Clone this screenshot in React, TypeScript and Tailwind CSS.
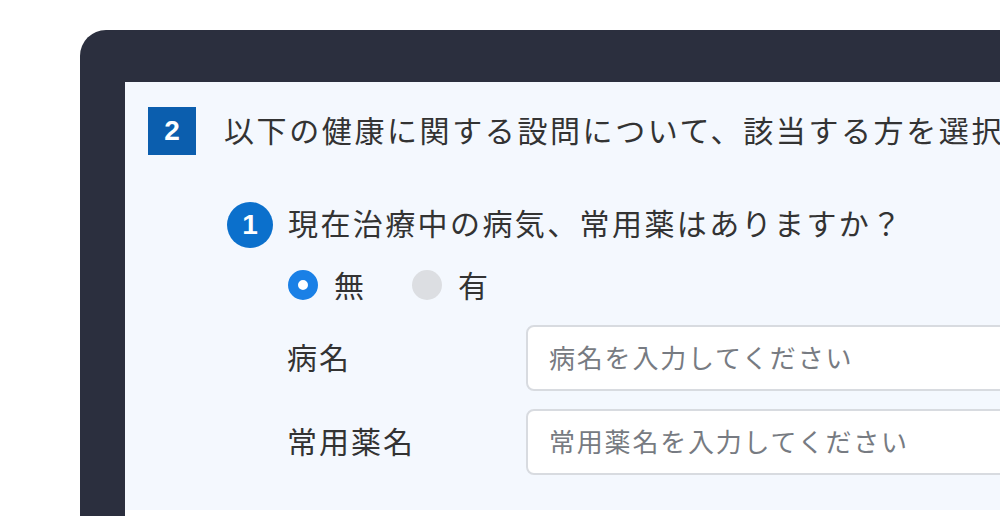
import React from "react";

const font = { fontFamily: '"Noto Sans CJK JP", "Noto Sans", sans-serif' };

export default function App() {
  return (
    <div
      className="w-[1000px] h-[516px] bg-white overflow-hidden pl-[80px] pt-[30px]"
      style={font}
    >
      <div className="h-[486px] w-[920px] bg-[#2b2f3e] rounded-tl-[26px] pl-[45px] pt-[52px]">
        <div className="h-[434px] w-[875px] bg-white overflow-hidden">
          <div className="h-[428px] w-full bg-[#f4f8fe] pl-[23px] pt-[25px] text-[#333]">
            {/* Heading */}
            <div className="flex items-center">
              <div className="shrink-0 w-[48px] h-[48px] bg-[#0b5eae] flex items-center justify-center text-white font-bold text-[28px] leading-none" style={{ fontFamily: '"Liberation Sans", Arial, sans-serif' }}>
                2
              </div>
              <div className="shrink-0 ml-[28px] pb-[4px] whitespace-nowrap text-[30px] tracking-[2.6px] leading-none">
                以下の健康に関する設問について、該当する方を選択してください
              </div>
            </div>

            {/* Question */}
            <div className="ml-[79px] mt-[47px]">
              <div className="flex items-center">
                <div className="shrink-0 w-[46px] h-[46px] rounded-full bg-[#0b70cc] flex items-center justify-center text-white font-bold text-[28px] leading-none" style={{ fontFamily: '"Liberation Sans", Arial, sans-serif' }}>
                  1
                </div>
                <div className="ml-[15px] pb-[6px] whitespace-nowrap text-[30px] tracking-[2.4px] leading-none">
                  現在治療中の病気、常用薬はありますか？
                </div>
              </div>

              <div className="ml-[61px] mt-[22px] flex items-center h-[30px]">
                <div className="shrink-0 w-[30px] h-[30px] rounded-full border-[10px] border-[#1a80e6] bg-white" />
                <span className="ml-[16px] pb-[3px] text-[30px] leading-none">無</span>
                <div className="shrink-0 ml-[48px] w-[30px] h-[30px] rounded-full bg-[#dcdee2]" />
                <span className="ml-[16px] pb-[3px] text-[30px] leading-none">有</span>
              </div>

              <div className="ml-[60px] mt-[25px] flex flex-col gap-[18px]">
                <div className="flex items-center">
                  <div className="shrink-0 w-[239px] pb-[5px] text-[30px] tracking-[2px] leading-none">病名</div>
                  <div className="shrink-0 w-[520px] h-[66px] bg-white border-2 border-[#d8dbe0] rounded-[8px] flex items-center pl-[21px] pb-[3px] text-[26px] tracking-[1.8px] text-[#777b82] whitespace-nowrap">
                    病名を入力してください
                  </div>
                </div>
                <div className="flex items-center">
                  <div className="shrink-0 w-[239px] pb-[5px] text-[30px] tracking-[2px] leading-none">常用薬名</div>
                  <div className="shrink-0 w-[520px] h-[66px] bg-white border-2 border-[#d8dbe0] rounded-[8px] flex items-center pl-[21px] pb-[3px] text-[26px] tracking-[1.8px] text-[#777b82] whitespace-nowrap">
                    常用薬名を入力してください
                  </div>
                </div>
              </div>
            </div>
          </div>
        </div>
      </div>
    </div>
  );
}
